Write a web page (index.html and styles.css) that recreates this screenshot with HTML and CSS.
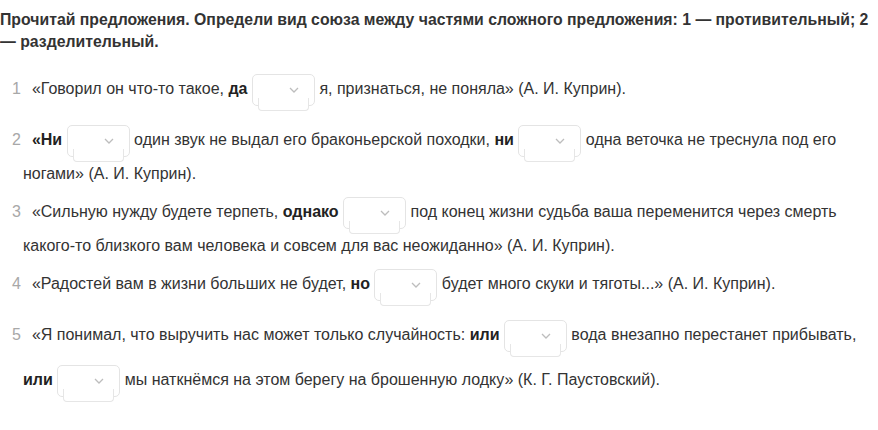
FILE: index.html
```html
<!DOCTYPE html>
<html lang="ru">
<head>
<meta charset="utf-8">
<link rel="stylesheet" href="styles.css">
</head>
<body>
<div class="task">
  <p class="title">Прочитай предложения. Определи вид союза между частями сложного предложения: 1 — противительный; 2 — разделительный.</p>
  <ol class="items">
    <li class="item"><span class="num">1</span>«Говорил он что-то такое, <b>да</b> <span class="dd"><svg class="chev" viewBox="0 0 10 6" width="10" height="6"><path d="M1 1l4 4 4-4"/></svg></span> я, признаться, не поняла» (А. И. Куприн).</li>
    <li class="item"><span class="num">2</span><b>«Ни</b> <span class="dd"><svg class="chev" viewBox="0 0 10 6" width="10" height="6"><path d="M1 1l4 4 4-4"/></svg></span> один звук не выдал его браконьерской походки, <b>ни</b> <span class="dd"><svg class="chev" viewBox="0 0 10 6" width="10" height="6"><path d="M1 1l4 4 4-4"/></svg></span> одна веточка не треснула под его ногами» (А. И. Куприн).</li>
    <li class="item"><span class="num">3</span>«Сильную нужду будете терпеть, <b>однако</b> <span class="dd"><svg class="chev" viewBox="0 0 10 6" width="10" height="6"><path d="M1 1l4 4 4-4"/></svg></span> под конец жизни судьба ваша переменится через смерть какого-то близкого вам человека и совсем для вас неожиданно» (А. И. Куприн).</li>
    <li class="item"><span class="num">4</span>«Радостей вам в жизни больших не будет, <b>но</b> <span class="dd"><svg class="chev" viewBox="0 0 10 6" width="10" height="6"><path d="M1 1l4 4 4-4"/></svg></span> будет много скуки и тяготы...» (А. И. Куприн).</li>
    <li class="item"><span class="num">5</span>«Я понимал, что выручить нас может только случайность: <b>или</b> <span class="dd"><svg class="chev" viewBox="0 0 10 6" width="10" height="6"><path d="M1 1l4 4 4-4"/></svg></span> вода внезапно перестанет прибывать, <b>или</b> <span class="dd"><svg class="chev" viewBox="0 0 10 6" width="10" height="6"><path d="M1 1l4 4 4-4"/></svg></span> мы наткнёмся на этом берегу на брошенную лодку» (К. Г. Паустовский).</li>
  </ol>
</div>
</body>
</html>
```
FILE: styles.css
```css
html, body {
  margin: 0;
  padding: 0;
  background: #fff;
}
body {
  font-family: "Liberation Sans", Arial, sans-serif;
  color: #333;
}
.task {
  padding: 9px 0 0;
}
.title {
  margin: 0;
  font-size: 15.8px;
  line-height: 22px;
  font-weight: bold;
  color: #333;
}
.items {
  list-style: none;
  margin: 14px 0 0;
  padding: 0 14px 0 23px;
}
.item {
  font-size: 16px;
  line-height: 21px;
  text-indent: -11px;
  margin-bottom: 6px;
}
.item b {
  font-weight: bold;
  color: #222;
}
.num {
  color: #a8a8a8;
  margin-right: 11px;
}
.dd {
  position: relative;
  display: inline-block;
  width: 63px;
  height: 32px;
  box-sizing: border-box;
  margin: 6.5px 0;
  vertical-align: middle;
  border: 1px solid #e4e4e4;
  border-radius: 5px;
  background: #fff;
  text-indent: 0;
  z-index: 1;
}
.dd::after {
  content: "";
  position: absolute;
  left: 5px;
  right: 5px;
  bottom: -6px;
  height: 12px;
  border: 1px solid #e6e6e6;
  border-top: none;
  border-radius: 0 0 4px 4px;
  background: #fff;
  z-index: -1;
}
.chev {
  position: absolute;
  right: 15px;
  top: 12px;
  fill: none;
  stroke: #bdbdbd;
  stroke-width: 1.3;
}
```
